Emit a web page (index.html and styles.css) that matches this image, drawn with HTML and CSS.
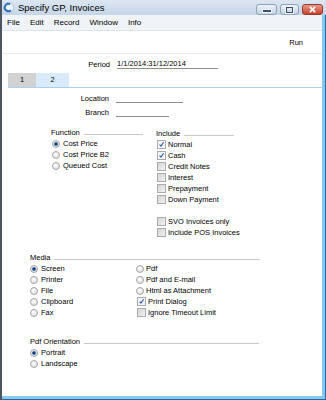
FILE: index.html
```html
<!DOCTYPE html>
<html lang="en">
<head>
    <meta charset="UTF-8">
    <title>Specify GP, Invoices</title>
    <link rel="stylesheet" href="styles.css">
</head>
<body>

<div class="window">
    <div class="titlebar">
        <svg class="app-icon" viewBox="0 0 12 12">
            <circle cx="6" cy="6" r="5.6" fill="#eef4fb" stroke="#7fa9d6" stroke-width="0.6"/>
            <path d="M7.8 2.4 A4 4 0 1 0 8.6 9" fill="none" stroke="#2c6cb5" stroke-width="2"/>
        </svg>
        <span class="title">Specify GP, Invoices</span>
        <div class="win-buttons">
            <span class="win-btn min"><span class="glyph-min"></span></span>
            <span class="win-btn max"><span class="glyph-max"></span></span>
            <span class="win-btn close">
                <svg viewBox="0 0 10 8" width="9" height="7">
                    <path d="M2 1 L8 7 M8 1 L2 7" stroke="#fff" stroke-width="2"/>
                </svg>
            </span>
        </div>
    </div>

    <div class="frame">
        <div class="menubar">
            <span>File</span>
            <span>Edit</span>
            <span>Record</span>
            <span>Window</span>
            <span>Info</span>
        </div>

        <div class="toolbar">
            <span class="run">Run</span>
        </div>

        <div class="field-row period">
            <span class="label">Period</span>
            <span class="field w-period">1/1/2014:31/12/2014</span>
        </div>

        <div class="tabs">
            <span class="tab">1</span>
            <span class="tab active">2</span>
        </div>

        <div class="field-row">
            <span class="label">Location</span>
            <span class="field w-location"></span>
        </div>
        <div class="field-row">
            <span class="label">Branch</span>
            <span class="field w-branch"></span>
        </div>

        <div class="groups">
            <div class="group function">
                <div class="group-head"><span>Function</span><span class="rule"></span></div>
                <div class="opt"><span class="radio on"></span>Cost Price</div>
                <div class="opt"><span class="radio"></span>Cost Price B2</div>
                <div class="opt"><span class="radio"></span>Queued Cost</div>
            </div>
            <div class="group include">
                <div class="group-head"><span>Include</span><span class="rule"></span></div>
                <div class="opt"><span class="check on"><svg viewBox="0 0 9 9"><path d="M2 4.6 L3.8 6.6 L7.2 1.6" fill="none" stroke="#2a55a8" stroke-width="1.4"/></svg></span>Normal</div>
                <div class="opt"><span class="check on"><svg viewBox="0 0 9 9"><path d="M2 4.6 L3.8 6.6 L7.2 1.6" fill="none" stroke="#2a55a8" stroke-width="1.4"/></svg></span>Cash</div>
                <div class="opt"><span class="check"></span>Credit Notes</div>
                <div class="opt"><span class="check"></span>Interest</div>
                <div class="opt"><span class="check"></span>Prepayment</div>
                <div class="opt"><span class="check"></span>Down Payment</div>
                <div class="opt blank"></div>
                <div class="opt"><span class="check"></span>SVO Invoices only</div>
                <div class="opt"><span class="check"></span>Include POS Invoices</div>
            </div>
        </div>

        <div class="group media">
            <div class="group-head"><span>Media</span><span class="rule"></span></div>
            <div class="cols">
                <div class="col left">
                    <div class="opt"><span class="radio on"></span>Screen</div>
                    <div class="opt"><span class="radio"></span>Printer</div>
                    <div class="opt"><span class="radio"></span>File</div>
                    <div class="opt"><span class="radio"></span>Clipboard</div>
                    <div class="opt"><span class="radio"></span>Fax</div>
                </div>
                <div class="col right">
                    <div class="opt"><span class="radio"></span>Pdf</div>
                    <div class="opt"><span class="radio"></span>Pdf and E-mail</div>
                    <div class="opt"><span class="radio"></span>Html as Attachment</div>
                    <div class="opt"><span class="check on"><svg viewBox="0 0 9 9"><path d="M2 4.6 L3.8 6.6 L7.2 1.6" fill="none" stroke="#2a55a8" stroke-width="1.4"/></svg></span>Print Dialog</div>
                    <div class="opt"><span class="check"></span>Ignore Timeout Limit</div>
                </div>
            </div>
        </div>

        <div class="group orientation">
            <div class="group-head"><span>Pdf Orientation</span><span class="rule"></span></div>
            <div class="opt"><span class="radio on"></span>Portrait</div>
            <div class="opt"><span class="radio"></span>Landscape</div>
        </div>
    </div>
</div>

</body>
</html>
```

FILE: styles.css
```css
body {
    margin: 0;
    font-family: "Liberation Sans", Arial, sans-serif;
    font-size: 7.5px;
    color: #000;
}
.window {
    width: 326px;
    height: 400px;
    box-sizing: border-box;
    border-left: 2px solid #4d5561;
    background: #2369a0;
    display: flex;
    flex-direction: column;
}

/* title bar */
.titlebar {
    height: 15px;
    display: flex;
    align-items: center;
    padding-left: 1px;
    background: linear-gradient(#dce6f2, #c6d5e7);
}
.app-icon {
    width: 11px;
    height: 11px;
    margin-right: 4px;
}
.title {
    flex: 1;
    font-size: 9.5px;
}
.win-buttons {
    display: flex;
    gap: 3px;
    padding-right: 3px;
    align-self: flex-start;
    margin-top: 4px;
}
.win-btn {
    width: 21px;
    height: 11px;
    box-sizing: border-box;
    border: 1px solid #8fa3bb;
    border-radius: 3px;
    background: linear-gradient(#edf3fa, #c3d2e4);
    display: flex;
    align-items: center;
    justify-content: center;
}
.win-btn.max {
    width: 19px;
}
.win-btn.close {
    background: linear-gradient(#e99a88, #c7412d);
    border-color: #98392b;
}
.glyph-min {
    width: 8px;
    height: 2px;
    margin-top: 2px;
    background: #3b4c63;
    border: 1px solid #f4f7fb;
}
.glyph-max {
    width: 5px;
    height: 4px;
    border: 1px solid #3b4c63;
    outline: 1px solid #f4f7fb;
}

/* window body */
.frame {
    flex: 1;
    margin: 0 1px 1px 0;
    border-right: 3px solid #86c8ef;
    border-bottom: 3px solid #86c8ef;
    background: #fff;
    display: flex;
    flex-direction: column;
}
.menubar {
    height: 15px;
    display: flex;
    align-items: center;
    font-size: 8px;
    background: #f0f4f9;
    border-bottom: 1px solid #dde3ea;
}
.menubar span {
    padding: 0 5px;
}
.toolbar {
    height: 22px;
    display: flex;
    align-items: center;
    justify-content: flex-end;
    padding-right: 19px;
    border-bottom: 1px solid #ececec;
}

/* fields */
.field-row {
    height: 14px;
    display: flex;
    align-items: center;
}
.period {
    margin-top: 3px;
}
.label {
    width: 107px;
    text-align: right;
    margin-right: 7px;
}
.period .label {
    width: 108px;
    margin-right: 7px;
}
.field {
    height: 10px;
    line-height: 10px;
    box-sizing: border-box;
    border-bottom: 1px solid #8c8c8c;
}
.w-period {
    width: 101px;
}
.w-location {
    width: 67px;
}
.w-branch {
    width: 53px;
}

/* tabs */
.tabs {
    margin: 2px 0 3px 6px;
    display: flex;
    border-bottom: 1px solid #a9cff2;
}
.tab {
    width: 28px;
    height: 14px;
    line-height: 14px;
    text-align: center;
    background: #d2d2d2;
}
.tab.active {
    width: 33px;
    background: #d9eafb;
}

/* option groups */
.groups {
    display: flex;
    margin-top: 8px;
    padding-left: 49px;
}
.group-head {
    height: 11px;
    display: flex;
    align-items: center;
}
.rule {
    flex: 1;
    height: 1px;
    margin: 3px 0 0 4px;
    background: #cacaca;
}
.opt {
    height: 11px;
    display: flex;
    align-items: center;
}
.function {
    width: 105px;
}
.function .group-head {
    width: 92px;
}
.function .opt {
    padding-left: 1px;
}
.include {
    padding-top: 1px;
}
.include .group-head {
    width: 78px;
}
.include .opt {
    padding-left: 1px;
}
.media {
    margin-top: 14px;
    padding-left: 28px;
}
.media .group-head {
    width: 230px;
}
.cols {
    display: flex;
}
.col.left {
    width: 106px;
}
.orientation {
    margin-top: 18px;
    padding-left: 28px;
}
.orientation .group-head {
    width: 229px;
}

.radio {
    width: 8px;
    height: 8px;
    box-sizing: border-box;
    margin-right: 3px;
    border: 1px solid #a5a5a5;
    border-radius: 50%;
    background: radial-gradient(circle at 40% 35%, #ffffff, #d6d6d6);
    display: flex;
    align-items: center;
    justify-content: center;
}
.radio.on::after {
    content: "";
    width: 4px;
    height: 4px;
    border-radius: 50%;
    background: radial-gradient(circle, #163d73 30%, #3f8ad0 75%, #9cc8ee);
}
.check {
    width: 9px;
    height: 9px;
    box-sizing: border-box;
    margin-right: 2px;
    border: 1px solid #aaaaaa;
    background: linear-gradient(135deg, #d4d4d4, #f3f3f3);
}
.check.on {
    background: #f6f8fb;
}
.check svg {
    display: block;
    width: 7px;
    height: 7px;
}
.col.right .radio {
    margin-right: 2px;
}
.col.right .check {
    margin-left: 1px;
}
```
